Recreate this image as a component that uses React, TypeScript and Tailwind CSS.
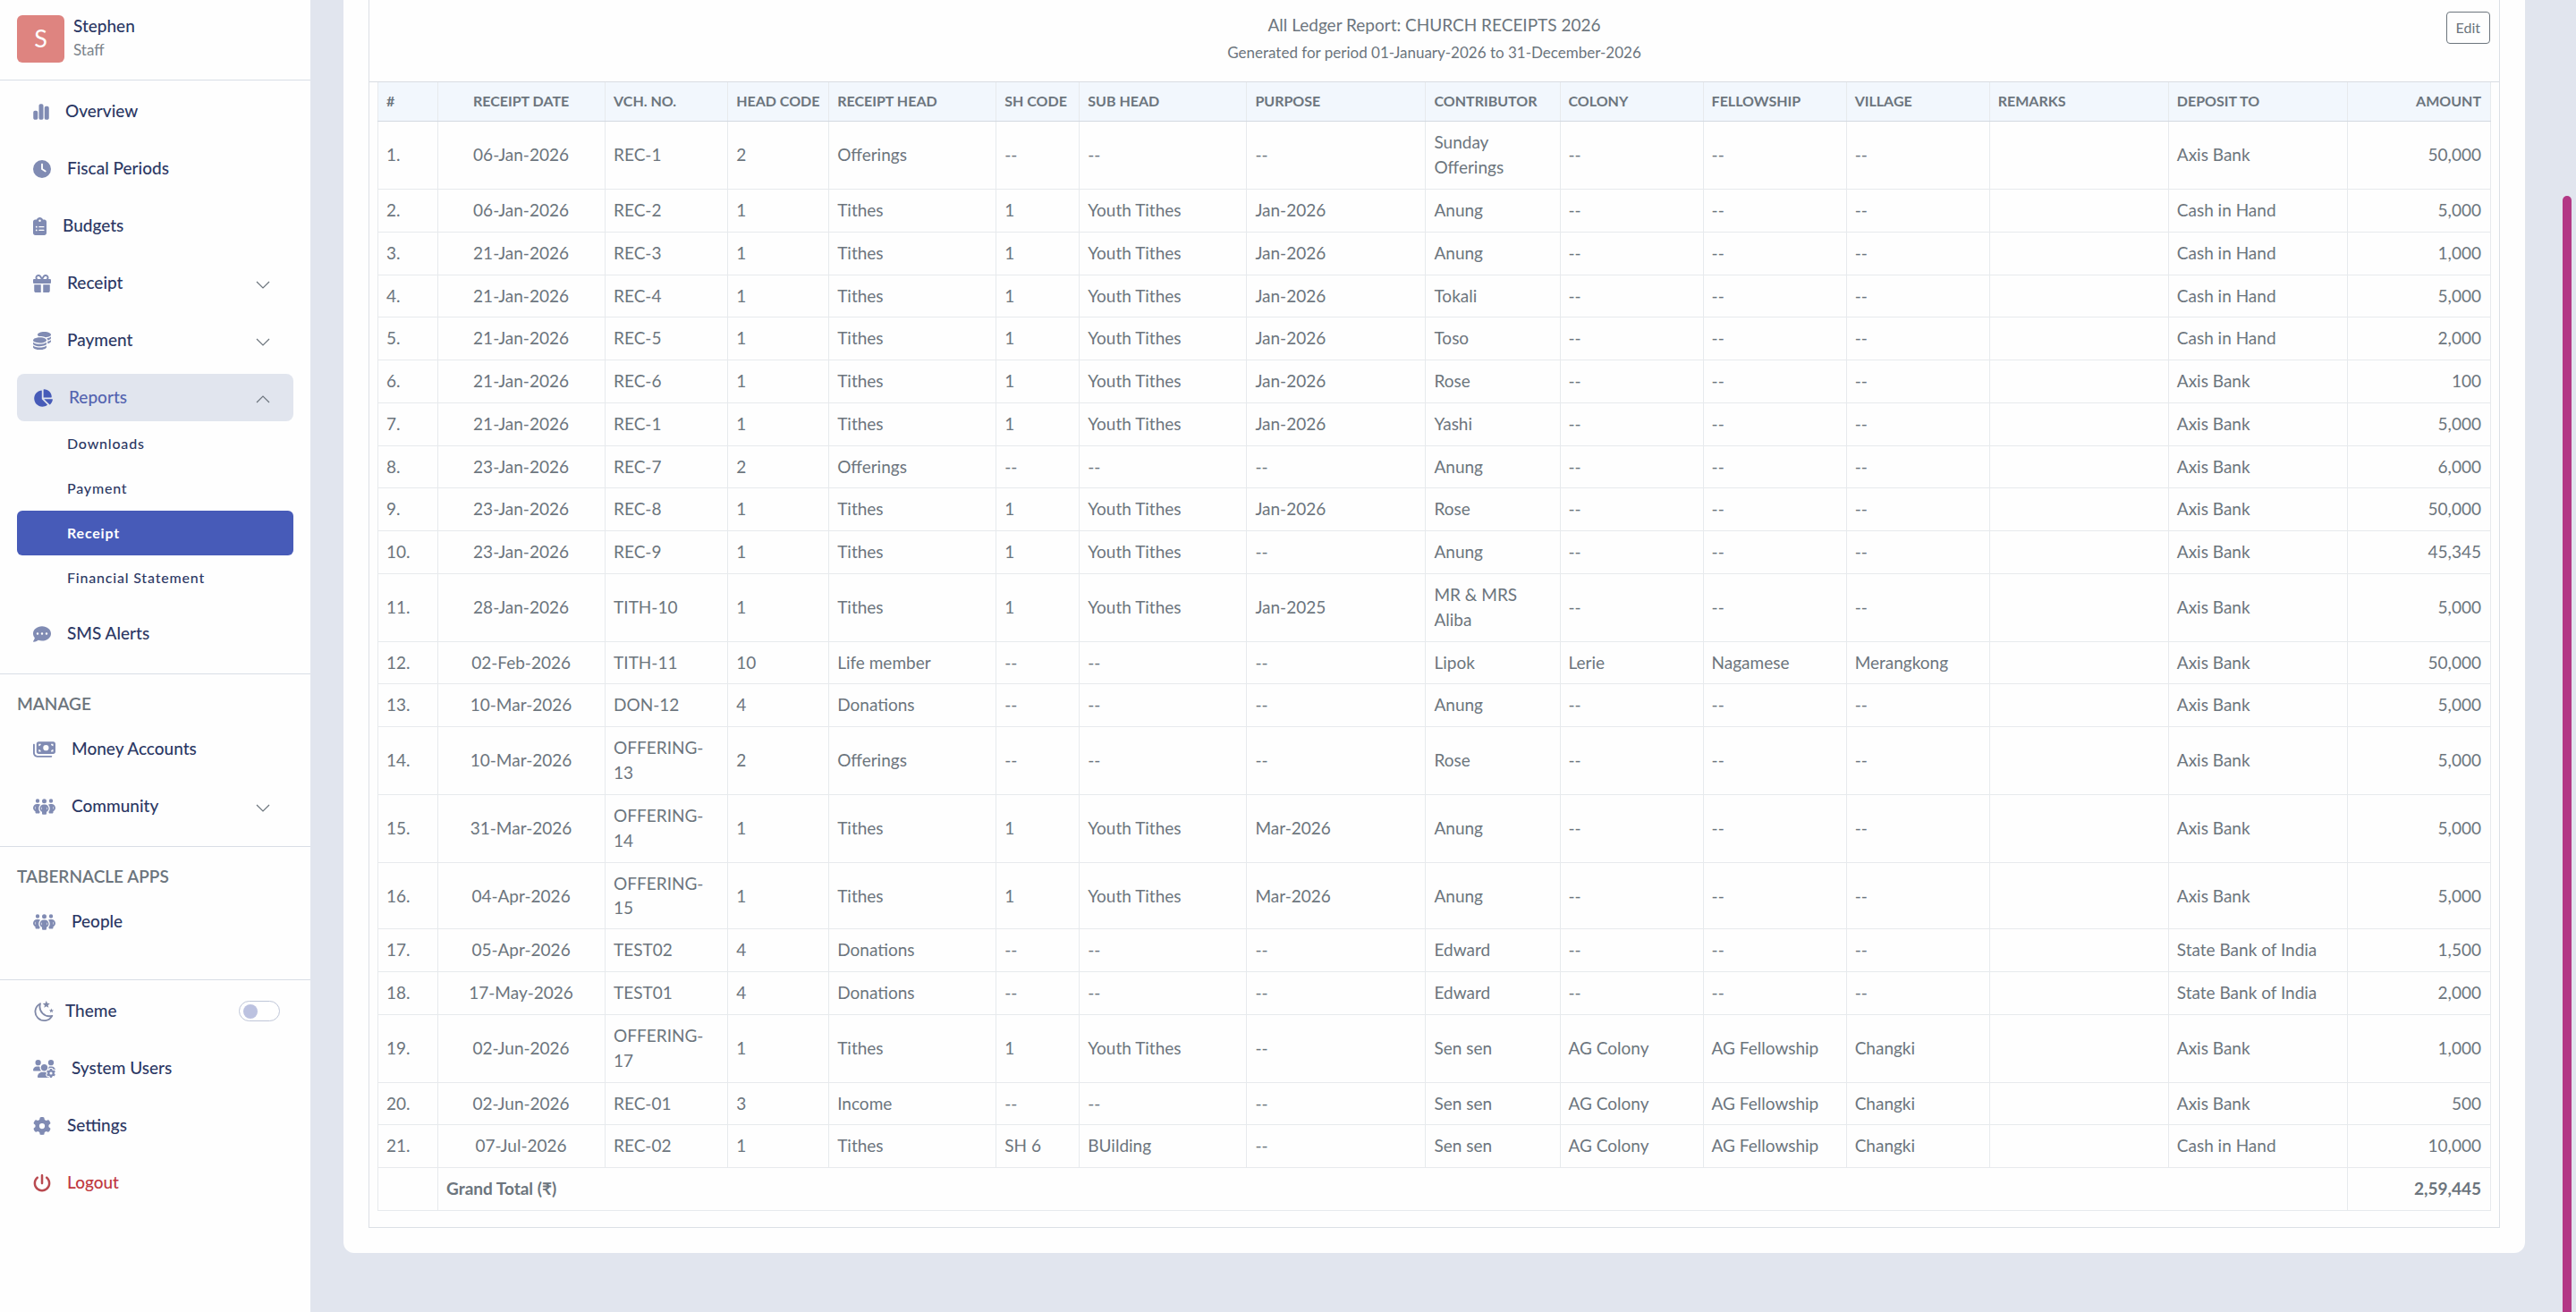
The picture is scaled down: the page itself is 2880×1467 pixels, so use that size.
import type { ComponentType, ReactNode } from "react";
import {
  FaChartPie,
  FaChartSimple,
  FaClipboardList,
  FaClock,
  FaCoins,
  FaCommentDots,
  FaGear,
  FaGift,
  FaMoneyBills,
  FaPeopleGroup,
  FaPowerOff,
  FaUsersGear,
} from "react-icons/fa6";

type IconType = ComponentType<{ className?: string }>;

function Chevron({ up = false }: { up?: boolean }) {
  return (
    <svg
      viewBox="0 0 16 9"
      className="mt-1 ml-auto h-[9px] w-4 shrink-0 text-[#6c757d]"
      fill="none"
      stroke="currentColor"
      strokeWidth="1.2"
      aria-hidden="true"
    >
      <path d={up ? "M1 8 8 1l7 7" : "M1 1l7 7 7-7"} />
    </svg>
  );
}

function MoonStars({ className }: { className?: string }) {
  return (
    <svg viewBox="-0.5 0 23 24" className={className} aria-hidden="true">
      <path
        d="M6.5 3.2A10 10 0 1 0 19.8 16.8C11.5 19 4 12 6.5 3.2Z"
        fill="none"
        stroke="currentColor"
        strokeWidth="1.8"
        strokeLinejoin="round"
      />
      <path
        fill="currentColor"
        d="m13.3 0 1.1 2.8 3 .2-2.3 1.9.8 2.9-2.6-1.6-2.5 1.6.7-2.9L9.2 3l3-.2ZM18.9 8.5l.7 1.7 1.9.1-1.5 1.2.5 1.8-1.6-1-1.6 1 .5-1.800-1.400-1.200 1.800-.1Z"
      />
    </svg>
  );
}

const itemBase =
  "mx-[19px] flex h-[53px] items-center gap-[18px] rounded-lg pl-[18px] text-left text-[19px] font-medium ";

function NavLink({
  icon: Icon,
  iconWidth = "w-5",
  label,
  danger = false,
}: {
  icon: IconType;
  iconWidth?: string;
  label: string;
  danger?: boolean;
}) {
  return (
    <a href="#" className={itemBase + (danger ? "text-[#c0393f]" : "text-[#2c3864]")}>
      <Icon
        className={
          "h-5 shrink-0 " + iconWidth + (danger ? " text-[#b94a50]" : " text-[#808bb3]")
        }
      />
      {label}
    </a>
  );
}

function NavGroup({
  icon: Icon,
  iconWidth = "w-5",
  label,
  open = false,
}: {
  icon: IconType;
  iconWidth?: string;
  label: string;
  open?: boolean;
}) {
  return (
    <button
      type="button"
      aria-expanded={open}
      className={
        itemBase + "pr-[26px] " + (open ? "bg-[#e1e5ee] text-[#5464b0]" : "text-[#2c3864]")
      }
    >
      <Icon
        className={
          "h-5 shrink-0 " + iconWidth + (open ? " text-[#475bb8]" : " text-[#808bb3]")
        }
      />
      {label}
      <Chevron up={open} />
    </button>
  );
}

function SubLink({ label, active = false }: { label: string; active?: boolean }) {
  return (
    <a
      href="#"
      aria-current={active ? "page" : undefined}
      className={
        "mx-[19px] flex h-[50px] items-center rounded-md pl-[56px] text-[16px] tracking-wider " +
        (active ? "bg-[#475bb8] font-bold text-white" : "font-medium text-[#2c3864]")
      }
    >
      {label}
    </a>
  );
}

function Section({ title, children }: { title?: string; children: ReactNode }) {
  return (
    <div className="flex flex-col gap-[11px] border-t border-[#d9dee6] pt-2 pb-[18px]">
      {title && (
        <h2 className="mx-[19px] mt-[10px] -mb-[2px] text-[19px] leading-[30px] font-semibold text-[#6c757d]">
          {title}
        </h2>
      )}
      {children}
    </div>
  );
}

function Sidebar() {
  return (
    <aside className="w-[347px] shrink-0 bg-[#fefefe]">
      <div className="flex h-[89px] items-start gap-[10px] px-[19px] pt-[17px]">
        <div className="flex size-[53px] items-center justify-center rounded-md bg-[#de8480] text-[27px] text-white">
          S
        </div>
        <div>
          <p className="text-[19px] leading-6 font-medium text-[#2c3864]">Stephen</p>
          <p className="text-[17px] leading-[29px] text-[#7b838b]">Staff</p>
        </div>
      </div>
      <nav>
        <Section>
          <NavLink icon={FaChartSimple} iconWidth="w-[18px]" label="Overview" />
          <NavLink icon={FaClock} label="Fiscal Periods" />
          <NavLink icon={FaClipboardList} iconWidth="w-[15px]" label="Budgets" />
          <NavGroup icon={FaGift} label="Receipt" />
          <NavGroup icon={FaCoins} label="Payment" />
          <div className="flex flex-col">
            <NavGroup icon={FaChartPie} iconWidth="w-[22px]" label="Reports" open />
            <SubLink label="Downloads" />
            <SubLink label="Payment" />
            <SubLink label="Receipt" active />
            <SubLink label="Financial Statement" />
          </div>
          <NavLink icon={FaCommentDots} label="SMS Alerts" />
        </Section>
        <Section title="MANAGE">
          <NavLink icon={FaMoneyBills} iconWidth="w-[25px]" label="Money Accounts" />
          <NavGroup icon={FaPeopleGroup} iconWidth="w-[25px]" label="Community" />
        </Section>
        <Section title="TABERNACLE APPS">
          <div className="mb-5 flex flex-col">
            <NavLink icon={FaPeopleGroup} iconWidth="w-[25px]" label="People" />
          </div>
        </Section>
        <Section>
          <label className="mx-[19px] flex h-[53px] items-center gap-3 pr-[15px] pl-[19px] text-[19px] font-medium text-[#2c3864]">
            <MoonStars className="h-6 w-[23px] shrink-0 text-[#8089a8]" />
            Theme
            <input
              type="checkbox"
              role="switch"
              className="ml-auto flex h-[23px] w-[46px] appearance-none items-center rounded-full border border-[#bfc6d8] bg-white px-1 before:size-4 before:rounded-full before:bg-[#bcc2e0] checked:justify-end"
            />
          </label>
          <NavLink icon={FaUsersGear} iconWidth="w-[25px]" label="System Users" />
          <NavLink icon={FaGear} label="Settings" />
          <NavLink icon={FaPowerOff} label="Logout" danger />
        </Section>
      </nav>
    </aside>
  );
}

const columns: { title: string; width: string; align?: string }[] = [
  { title: "#", width: "w-[67px]" },
  { title: "RECEIPT DATE", width: "w-[187px]", align: "text-center" },
  { title: "VCH. NO.", width: "w-[137px]" },
  { title: "HEAD CODE", width: "w-[113px]" },
  { title: "RECEIPT HEAD", width: "w-[187px]" },
  { title: "SH CODE", width: "w-[93px]" },
  { title: "SUB HEAD", width: "w-[187px]" },
  { title: "PURPOSE", width: "w-[200px]" },
  { title: "CONTRIBUTOR", width: "w-[150px]" },
  { title: "COLONY", width: "w-[160px]" },
  { title: "FELLOWSHIP", width: "w-[160px]" },
  { title: "VILLAGE", width: "w-[160px]" },
  { title: "REMARKS", width: "w-[200px]" },
  { title: "DEPOSIT TO", width: "w-[200px]" },
  { title: "AMOUNT", width: "w-[160px]", align: "text-right" },
];

const NONE = "--";
const AXIS = "Axis Bank";
const CASH = "Cash in Hand";
const SBI = "State Bank of India";
const YOUTH = "Youth Tithes";

const rows: string[][] = [
  ["06-Jan-2026", "REC-1", "2", "Offerings", NONE, NONE, NONE, "Sunday Offerings", NONE, NONE, NONE, "", AXIS, "50,000"],
  ["06-Jan-2026", "REC-2", "1", "Tithes", "1", YOUTH, "Jan-2026", "Anung", NONE, NONE, NONE, "", CASH, "5,000"],
  ["21-Jan-2026", "REC-3", "1", "Tithes", "1", YOUTH, "Jan-2026", "Anung", NONE, NONE, NONE, "", CASH, "1,000"],
  ["21-Jan-2026", "REC-4", "1", "Tithes", "1", YOUTH, "Jan-2026", "Tokali", NONE, NONE, NONE, "", CASH, "5,000"],
  ["21-Jan-2026", "REC-5", "1", "Tithes", "1", YOUTH, "Jan-2026", "Toso", NONE, NONE, NONE, "", CASH, "2,000"],
  ["21-Jan-2026", "REC-6", "1", "Tithes", "1", YOUTH, "Jan-2026", "Rose", NONE, NONE, NONE, "", AXIS, "100"],
  ["21-Jan-2026", "REC-1", "1", "Tithes", "1", YOUTH, "Jan-2026", "Yashi", NONE, NONE, NONE, "", AXIS, "5,000"],
  ["23-Jan-2026", "REC-7", "2", "Offerings", NONE, NONE, NONE, "Anung", NONE, NONE, NONE, "", AXIS, "6,000"],
  ["23-Jan-2026", "REC-8", "1", "Tithes", "1", YOUTH, "Jan-2026", "Rose", NONE, NONE, NONE, "", AXIS, "50,000"],
  ["23-Jan-2026", "REC-9", "1", "Tithes", "1", YOUTH, NONE, "Anung", NONE, NONE, NONE, "", AXIS, "45,345"],
  ["28-Jan-2026", "TITH-10", "1", "Tithes", "1", YOUTH, "Jan-2025", "MR & MRS Aliba", NONE, NONE, NONE, "", AXIS, "5,000"],
  ["02-Feb-2026", "TITH-11", "10", "Life member", NONE, NONE, NONE, "Lipok", "Lerie", "Nagamese", "Merangkong", "", AXIS, "50,000"],
  ["10-Mar-2026", "DON-12", "4", "Donations", NONE, NONE, NONE, "Anung", NONE, NONE, NONE, "", AXIS, "5,000"],
  ["10-Mar-2026", "OFFERING-13", "2", "Offerings", NONE, NONE, NONE, "Rose", NONE, NONE, NONE, "", AXIS, "5,000"],
  ["31-Mar-2026", "OFFERING-14", "1", "Tithes", "1", YOUTH, "Mar-2026", "Anung", NONE, NONE, NONE, "", AXIS, "5,000"],
  ["04-Apr-2026", "OFFERING-15", "1", "Tithes", "1", YOUTH, "Mar-2026", "Anung", NONE, NONE, NONE, "", AXIS, "5,000"],
  ["05-Apr-2026", "TEST02", "4", "Donations", NONE, NONE, NONE, "Edward", NONE, NONE, NONE, "", SBI, "1,500"],
  ["17-May-2026", "TEST01", "4", "Donations", NONE, NONE, NONE, "Edward", NONE, NONE, NONE, "", SBI, "2,000"],
  ["02-Jun-2026", "OFFERING-17", "1", "Tithes", "1", YOUTH, NONE, "Sen sen", "AG Colony", "AG Fellowship", "Changki", "", AXIS, "1,000"],
  ["02-Jun-2026", "REC-01", "3", "Income", NONE, NONE, NONE, "Sen sen", "AG Colony", "AG Fellowship", "Changki", "", AXIS, "500"],
  ["07-Jul-2026", "REC-02", "1", "Tithes", "SH 6", "BUilding", NONE, "Sen sen", "AG Colony", "AG Fellowship", "Changki", "", CASH, "10,000"],
];

const cell = "border border-[#e7eaed] pt-[9px] pr-[10px] pb-[10px] pl-[9px]";

function LedgerTable() {
  return (
    <table className="w-full table-fixed border-collapse text-[19px] leading-7 text-[#6c757d]">
      <colgroup>
        {columns.map((c) => (
          <col key={c.title} className={c.width} />
        ))}
      </colgroup>
      <thead>
        <tr className="bg-[#f2f7fd] text-[16px] leading-6">
          {columns.map((c) => (
            <th
              key={c.title}
              scope="col"
              className={
                "border-x border-b border-x-[#e7eaed] border-b-[#d3d9e0] pt-[9px] pr-[10px] pb-[10px] pl-[9px] font-bold whitespace-nowrap " +
                (c.align ?? "text-left")
              }
            >
              {c.title}
            </th>
          ))}
        </tr>
      </thead>
      <tbody>
        {rows.map((r, i) => (
          <tr key={i} className="nth-[4n]:leading-[27px]">
            <td className={cell}>{i + 1}.</td>
            {r.map((value, j) => (
              <td key={j} className={cell + " " + (columns[j + 1].align ?? "text-left")}>
                {value}
              </td>
            ))}
          </tr>
        ))}
      </tbody>
      <tfoot>
        <tr className="font-bold">
          <td className={cell} />
          <th scope="row" colSpan={13} className={cell + " text-left"}>
            Grand Total (₹)
          </th>
          <td className={cell + " text-right"}>2,59,445</td>
        </tr>
      </tfoot>
    </table>
  );
}

export default function App() {
  return (
    <div className="flex min-h-screen bg-[#e1e5ee] font-['Lato','Noto_Sans',sans-serif]">
      <Sidebar />
      <main className="min-w-0 flex-1 px-[37px]">
        <div className="rounded-b-xl bg-[#fefefe] px-7 pb-7">
          <section className="border-x border-b border-[#dce0e5]">
            <header className="grid grid-cols-[1fr_auto_1fr] items-start border-b border-[#d9dde3] px-[10px] pt-[13px] pb-4 text-[#6c757d]">
              <div className="col-start-2 text-center">
                <h1 className="text-[19px] leading-[30px]">All Ledger Report: CHURCH RECEIPTS 2026</h1>
                <p className="text-[17px] leading-8">
                  Generated for period 01-January-2026 to 31-December-2026
                </p>
              </div>
              <button
                type="button"
                className="h-9 justify-self-end rounded-sm border border-[#6c757d] px-[10px] text-[16px]"
              >
                Edit
              </button>
            </header>
            <div className="px-[9px] pb-[18px]">
              <LedgerTable />
            </div>
          </section>
        </div>
      </main>
      <div className="flex w-5 shrink-0 px-[5px] pt-[219px]" aria-hidden="true">
        <div className="flex-1 rounded-t-full bg-[#b33885]" />
      </div>
    </div>
  );
}
